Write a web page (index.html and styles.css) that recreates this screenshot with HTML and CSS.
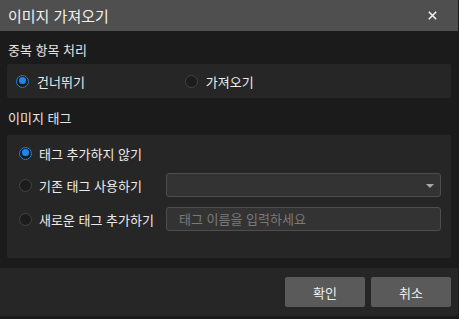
FILE: index.html
```html
<!DOCTYPE html>
<html lang="ko">
<head>
<meta charset="utf-8">
<link rel="stylesheet" href="styles.css">
</head>
<body>
<div class="dialog">
  <div class="titlebar">
    <span class="title">이미지 가져오기</span>
    <svg class="close" width="9" height="9" viewBox="0 0 9 9"><path d="M0.8 0.8L8.2 8.2M8.2 0.8L0.8 8.2" stroke="#f0f0f0" stroke-width="1.6" fill="none"/></svg>
  </div>
  <div class="content">
    <div class="section-label first">중복 항목 처리</div>
    <div class="panel panel-dup">
      <label class="opt"><span class="radio checked"></span><span class="txt">건너뛰기</span></label>
      <label class="opt opt-second"><span class="radio"></span><span class="txt">가져오기</span></label>
    </div>
    <div class="section-label second">이미지 태그</div>
    <div class="panel panel-tag">
      <div class="row r1">
        <label class="opt"><span class="radio checked"></span><span class="txt">태그 추가하지 않기</span></label>
      </div>
      <div class="row r2">
        <label class="opt"><span class="radio"></span><span class="txt">기존 태그 사용하기</span></label>
        <div class="select"><span class="arrow"></span></div>
      </div>
      <div class="row r3">
        <label class="opt"><span class="radio"></span><span class="txt">새로운 태그 추가하기</span></label>
        <div class="input">태그 이름을 입력하세요</div>
      </div>
    </div>
  </div>
  <div class="footer">
    <button class="btn">확인</button>
    <button class="btn">취소</button>
  </div>
</div>
</body>
</html>
```
FILE: styles.css
```css
html, body {
  margin: 0;
  padding: 0;
  background: #1b1b1b;
  width: 459px;
  height: 319px;
  overflow: hidden;
}
body {
  font-family: "Noto Sans CJK KR", "Noto Sans", sans-serif;
  color: #e8e8e8;
  font-size: 13px;
}
.dialog {
  width: 458px;
  height: 319px;
  display: flex;
  flex-direction: column;
}
.titlebar {
  height: 31px;
  background: #4f4f4f;
  display: flex;
  align-items: center;
  justify-content: space-between;
  padding: 0 21px 0 8px;
  box-sizing: border-box;
}
.title {
  font-size: 15px;
  color: #f2f2f2;
  line-height: 1;
  margin-top: -1px;
}
.close { display: block; }
.content {
  padding: 0 7px;
}
.section-label {
  font-size: 13px;
  color: #e6e6e6;
  line-height: 18px;
  padding-left: 1px;
}
.section-label.first {
  height: 33px;
  padding-top: 10px;
  box-sizing: border-box;
}
.section-label.second {
  height: 37px;
  padding-top: 11px;
  box-sizing: border-box;
}
.panel {
  background: #262626;
  border-radius: 2px;
}
.panel-dup {
  height: 34px;
  display: flex;
  align-items: center;
  padding-left: 9px;
}
.opt {
  display: flex;
  align-items: center;
  gap: 8px;
  color: #ececec;
  white-space: nowrap;
}
.opt-second {
  margin-left: 100px;
}
.radio {
  width: 13px;
  height: 13px;
  border-radius: 50%;
  box-sizing: border-box;
  border: 1.5px solid #444444;
  background: #1c1c1c;
  position: relative;
  flex: none;
}
.radio.checked {
  border: 1.5px solid #1f7fe0;
  background: #1b1b1b;
}
.radio.checked::after {
  content: "";
  position: absolute;
  left: 1.5px;
  top: 1.5px;
  width: 7px;
  height: 7px;
  border-radius: 50%;
  background: #1f86f0;
}
.panel-tag {
  height: 123px;
  padding: 6px 10px 0 12px;
  box-sizing: border-box;
}
.row {
  height: 24px;
  display: grid;
  grid-template-columns: 147px 1fr;
  align-items: center;
}
.row .opt { gap: 7px; }
.r2 { margin-top: 8px; }
.r3 { margin-top: 10px; }
.select, .input {
  height: 24px;
  box-sizing: border-box;
  border: 1px solid #4e4e4e;
  border-radius: 3px;
  background: #333333;
}
.select {
  position: relative;
}
.arrow {
  position: absolute;
  right: 6px;
  top: 10px;
  width: 0;
  height: 0;
  border-left: 4px solid transparent;
  border-right: 4px solid transparent;
  border-top: 4px solid #a8a8a8;
}
.input {
  color: #7a7a7a;
  font-size: 13px;
  line-height: 22px;
  padding-left: 12px;
}
.footer {
  margin-top: 10px;
  height: 48px;
  background: #262626;
  border-radius: 0 0 4px 0;
  display: flex;
  justify-content: flex-end;
  align-items: center;
  gap: 6px;
  padding-right: 7px;
}
.btn {
  width: 80px;
  height: 30px;
  border: none;
  border-radius: 2px;
  background: #5a5a5a;
  color: #f0f0f0;
  font-family: "Noto Sans CJK KR", "Noto Sans", sans-serif;
  font-size: 13px;
  padding: 0;
}
```
